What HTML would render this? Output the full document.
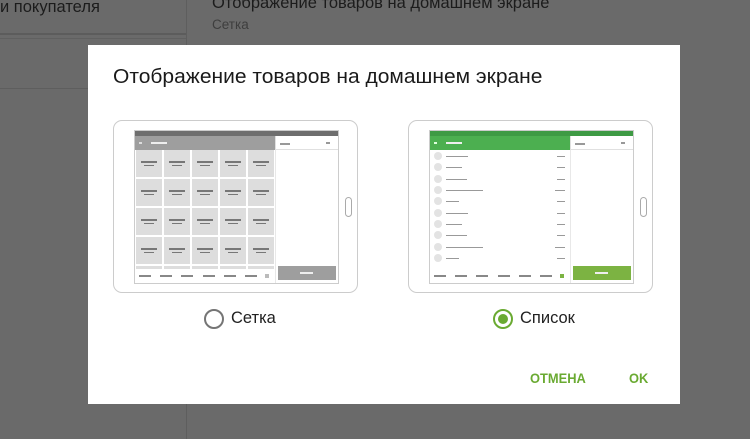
<!DOCTYPE html>
<html><head><meta charset="utf-8"><style>
*{margin:0;padding:0;box-sizing:border-box}
body{width:750px;height:439px;overflow:hidden;background:#6a6a6a;font-family:"Liberation Sans",sans-serif;position:relative}
.a{position:absolute}
.dlg{left:88px;top:45px;width:592px;height:359px;background:#fff}
.title{left:25px;top:21px;font-size:20px;color:#1a1a1a;white-space:nowrap;transform-origin:0 0;transform:scaleX(1.05)}
.tab{width:245px;height:173px;border:1.5px solid #ccc;border-radius:9px;background:#fff}
.scr{left:20px;top:9px;width:205px;height:154px;border:1px solid #ccc;background:#fff;overflow:hidden}
.home{left:231px;top:76px;width:7px;height:20px;border:1px solid #aaa;border-radius:4px}
.sb{left:0;top:0;width:100%;height:5px}
.tb{left:0;top:5px;width:140px;height:14px}
.rp{left:140px;top:5px;width:64px;height:14px;border-bottom:1px solid #e0e0e0;border-left:1px solid #e0e0e0}
.rpl{left:140px;top:19px;width:1px;height:135px;background:#e8e8e8}
.grid{left:1px;top:19px;width:139px;display:grid;grid-template-columns:repeat(5,26px);gap:2px;padding:0}
.grid div{height:27px;background:#ddd;position:relative}
.grid div:before{content:"";position:absolute;left:5px;top:11px;width:16px;height:1.5px;background:#777}
.grid div:after{content:"";position:absolute;left:8px;top:14.5px;width:10px;height:1.5px;background:#777}
.bb{left:0;top:138px;width:140px;height:16px;background:#fff}
.d{position:absolute;height:1.5px;background:#888}
.btn{left:143px;top:135px;width:58px;height:14px}
.row{position:absolute;left:4px;width:135px;height:11px}
.row i{position:absolute;left:0;top:1px;width:8px;height:8px;border-radius:50%;background:#e3e3e3}
.row b{position:absolute;left:12px;top:5px;height:1px;background:#999}
.row s{position:absolute;right:4px;top:5px;width:8px;height:1px;background:#999}
.rad{width:20px;height:20px;border-radius:50%;border:2px solid #757575}
.lbl{font-size:16.5px;color:#212121}
.bt{font-size:14px;font-weight:bold;color:#6aaa32;transform-origin:0 0;transform:scaleX(0.92)}
</style></head><body>
<div class="a" style="left:0;top:-2px;font-size:16.5px;color:#1c1c1c">и покупателя</div>
<div class="a" style="left:212px;top:-6px;font-size:16.5px;color:#1c1c1c">Отображение товаров на домашнем экране</div>
<div class="a" style="left:212px;top:17px;font-size:13.5px;color:#3e3e3e">Сетка</div>
<div class="a" style="left:0;top:33px;width:186px;height:2px;background:#5c5c5c"></div>
<div class="a" style="left:0;top:38px;width:186px;height:1px;background:#606060"></div>
<div class="a" style="left:0;top:88px;width:186px;height:1px;background:#5e5e5e"></div>
<div class="a" style="left:186px;top:0;width:1px;height:439px;background:#5e5e5e"></div>

<div class="a dlg">
<div class="a title">Отображение товаров на домашнем экране</div>

<div class="a tab" style="left:25px;top:75px">
 <div class="a scr">
  <div class="a sb" style="background:#6e6e6e"></div>
  <div class="a tb" style="background:#9e9e9e"><div class="d" style="left:4px;top:6px;width:3px;background:#ddd"></div><div class="d" style="left:16px;top:6px;width:16px;background:#eee"></div></div>
  <div class="a rp"><div class="d" style="left:4px;top:7px;width:10px;background:#999"></div><div class="d" style="left:50px;top:6px;width:4px;background:#999"></div></div>
  <div class="a rpl"></div>
  <div class="a grid"><div></div><div></div><div></div><div></div><div></div><div></div><div></div><div></div><div></div><div></div><div></div><div></div><div></div><div></div><div></div><div></div><div></div><div></div><div></div><div></div><div></div><div></div><div></div><div></div><div></div></div>
  <div class="a bb"><div class="d" style="left:4px;top:6px;width:12px"></div><div class="d" style="left:25px;top:6px;width:12px"></div><div class="d" style="left:46px;top:6px;width:12px"></div><div class="d" style="left:68px;top:6px;width:12px"></div><div class="d" style="left:89px;top:6px;width:12px"></div><div class="d" style="left:110px;top:6px;width:12px"></div><div class="d" style="left:130px;top:5px;width:4px;height:4px;background:#bbb"></div></div>
  <div class="a btn" style="background:#9e9e9e"><div class="d" style="left:22px;top:6px;width:13px;background:#eee"></div></div>
 </div>
 <div class="a home"></div>
</div>

<div class="a tab" style="left:320px;top:75px">
 <div class="a scr">
  <div class="a sb" style="background:#3e9a44"></div>
  <div class="a tb" style="background:#4caf50"><div class="d" style="left:4px;top:6px;width:3px;background:#dfd"></div><div class="d" style="left:16px;top:6px;width:16px;background:#eee"></div></div>
  <div class="a rp"><div class="d" style="left:4px;top:7px;width:10px;background:#999"></div><div class="d" style="left:50px;top:6px;width:4px;background:#999"></div></div>
  <div class="a rpl"></div>
  <div class="row" style="top:20px"><i></i><b style="width:22px"></b><s></s></div>
  <div class="row" style="top:31px"><i></i><b style="width:16px"></b><s></s></div>
  <div class="row" style="top:43px"><i></i><b style="width:21px"></b><s></s></div>
  <div class="row" style="top:54px"><i></i><b style="width:37px"></b><s style="width:10px"></s></div>
  <div class="row" style="top:65px"><i></i><b style="width:13px"></b><s></s></div>
  <div class="row" style="top:77px"><i></i><b style="width:22px"></b><s></s></div>
  <div class="row" style="top:88px"><i></i><b style="width:16px"></b><s></s></div>
  <div class="row" style="top:99px"><i></i><b style="width:21px"></b><s></s></div>
  <div class="row" style="top:111px"><i></i><b style="width:37px"></b><s style="width:10px"></s></div>
  <div class="row" style="top:122px"><i></i><b style="width:13px"></b><s></s></div>
  <div class="a bb"><div class="d" style="left:4px;top:6px;width:12px"></div><div class="d" style="left:25px;top:6px;width:12px"></div><div class="d" style="left:46px;top:6px;width:12px"></div><div class="d" style="left:68px;top:6px;width:12px"></div><div class="d" style="left:89px;top:6px;width:12px"></div><div class="d" style="left:110px;top:6px;width:12px"></div><div class="d" style="left:130px;top:5px;width:4px;height:4px;background:#7cb342"></div></div>
  <div class="a btn" style="background:#7cb342"><div class="d" style="left:22px;top:6px;width:13px;background:#eee"></div></div>
 </div>
 <div class="a home"></div>
</div>

<div class="a rad" style="left:116px;top:264px"></div>
<div class="a lbl" style="left:143px;top:264px">Сетка</div>
<div class="a rad" style="left:405px;top:264px;border-color:#6aaa32"><div class="a" style="left:3px;top:3px;width:10px;height:10px;border-radius:50%;background:#6aaa32"></div></div>
<div class="a lbl" style="left:432px;top:264px">Список</div>

<div class="a bt" style="left:442px;top:325px">ОТМЕНА</div>
<div class="a bt" style="left:541px;top:325px">OK</div>
</div>
</body></html>
